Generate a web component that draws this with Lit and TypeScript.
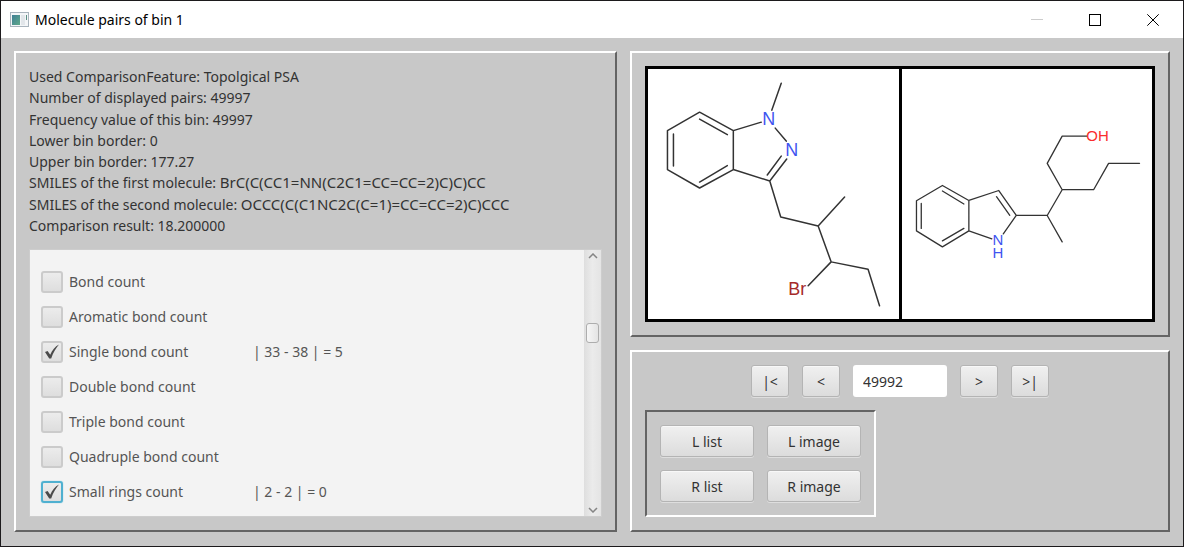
import { LitElement, html, css, svg } from "lit";
import { customElement, property, state } from "lit/decorators.js";

interface Feature {
  name: string;
  checked: boolean;
  result?: string;
  focused?: boolean;
}

interface Fact {
  label: string;
  value: string;
  smiles?: boolean;
}

const FACTS: Fact[] = [
  { label: "Used ComparisonFeature", value: "Topolgical PSA" },
  { label: "Number of displayed pairs", value: "49997" },
  { label: "Frequency value of this bin", value: "49997" },
  { label: "Lower bin border", value: "0" },
  { label: "Upper bin border", value: "177.27" },
  { label: "SMILES of the first molecule", value: "BrC(C(CC1=NN(C2C1=CC=CC=2)C)C)CC", smiles: true },
  { label: "SMILES of the second molecule", value: "OCCC(C(C1NC2C(C=1)=CC=CC=2)C)CCC", smiles: true },
  { label: "Comparison result", value: "18.200000" },
];

const FEATURES: Feature[] = [
  { name: "Bond count", checked: false },
  { name: "Aromatic bond count", checked: false },
  { name: "Single bond count", checked: true, result: "| 33 - 38 | = 5" },
  { name: "Double bond count", checked: false },
  { name: "Triple bond count", checked: false },
  { name: "Quadruple bond count", checked: false },
  { name: "Small rings count", checked: true, result: "| 2 - 2 | = 0", focused: true },
];

@customElement("feature-list")
export class FeatureList extends LitElement {
  @property({ attribute: false }) features: Feature[] = [];
  @property({ type: Number }) position = 25;

  static styles = css`
    :host { display: flex; background: #f3f3f3; border: 1px solid #cdcdcd; box-sizing: border-box; color: #555; overflow: hidden; }
    .rows { flex: 1; min-width: 0; margin: 0; padding: 14px 0 0 11px; list-style: none; overflow: hidden; }
    .row { display: grid; grid-template-columns: 212px 1fr; align-items: center; height: 35px; }
    .name { display: flex; align-items: center; gap: 6px; white-space: nowrap; }
    .box {
      appearance: none; box-sizing: border-box; width: 22px; height: 22px; margin: 0; flex: none;
      border: 2px solid #cbcbcb; border-radius: 3px;
      background: linear-gradient(#ececec, #dedede);
    }
    .box:checked {
      background: url("data:image/svg+xml,%3Csvg xmlns='http://www.w3.org/2000/svg' viewBox='0 0 18 18'%3E%3Cpath d='M2 9 L4.6 8 L7.2 11.8 C9.2 7.4 12 3.600 16 1.600 C12.8 5.400 10.200 9.800 8.200 15.400 L6.200 15.400 Z' fill='%234a4a4a'/%3E%3C/svg%3E") center / 18px no-repeat, linear-gradient(#ececec, #dedede);
    }
    .box.focused { border-color: #4fb0d0; box-shadow: 0 0 1px #4fb0d0; }
    .bar { display: flex; flex-direction: column; width: 17px; background: linear-gradient(90deg, #dedede, #ebebeb 50%, #e4e4e4); }
    .step { display: grid; place-items: center; height: 12px; padding: 0; border: 0; background: none; }
    .track { flex: 1; display: flex; flex-direction: column; align-items: center; }
    .thumb { box-sizing: border-box; width: 13px; height: 20px; border: 1px solid #adadad; border-radius: 3px; background: linear-gradient(90deg, #f6f6f6, #e4e4e4); }
    .spacer { flex: none; }
  `;

  render() {
    return html`
      <ul class="rows">
        ${this.features.map(
          (f) => html`<li class="row">
            <label class="name">
              <input class="box ${f.focused ? "focused" : ""}" type="checkbox" .checked=${f.checked} />
              <span>${f.name}</span>
            </label>
            <span>${f.result ?? ""}</span>
          </li>`
        )}
      </ul>
      <div class="bar">
        <button class="step" aria-label="Scroll up">
          <svg width="10" height="6" viewBox="0 0 10 6"><path d="M1 5 L5 1 L9 5" fill="none" stroke="#858585" stroke-width="1.5" /></svg>
        </button>
        <div class="track">
          <div class="spacer" style="height:${this.position}%"></div>
          <div class="thumb"></div>
        </div>
        <button class="step" aria-label="Scroll down">
          <svg width="10" height="6" viewBox="0 0 10 6"><path d="M1 1 L5 5 L9 1" fill="none" stroke="#858585" stroke-width="1.5" /></svg>
        </button>
      </div>
    `;
  }
}

@customElement("molecule-pair")
export class MoleculePair extends LitElement {
  static styles = css`
    :host { display: grid; grid-template-columns: 1fr 1fr; gap: 3px; padding: 3px; background: #000; }
    .cell { display: block; width: 100%; height: 100%; min-height: 0; background: #fff; }
    .bonds { fill: none; stroke: #333; stroke-width: 1.5; stroke-linecap: round; stroke-linejoin: round; }
    .thin { stroke-width: 1.3; }
    .atom { font-family: "Liberation Sans", Arial, sans-serif; font-size: 18px; text-anchor: middle; }
    .small { font-size: 15px; }
    .n { fill: #3f55f0; }
    .br { fill: #a52a2a; }
    .o { fill: #fa2d2d; }
  `;

  private first() {
    return svg`
      <path class="bonds" d="M699.7 112 L667.5 130.5 V169.5 L699.7 188 L733.5 169.5 V130.5 Z
        M673.5 134 V166 M699.7 119 L727.5 134.5 M699.7 182 L727.5 165.5
        M733.5 130.5 L761.5 122 M772 110 L781.5 83 M775.5 128 L786.5 141
        M787 159 L770 181 L733.5 169.5 M781.5 156 L767.5 175
        M770 181 L781 217 L818.5 226 L845 197 M818.5 226 L831.5 262 L868.5 269.5 L880 306
        M831.5 262 L808.5 286" />
      <text class="atom n" x="769" y="125">N</text>
      <text class="atom n" x="792" y="156">N</text>
      <text class="atom br" x="797.5" y="295">Br</text>`;
  }

  private second() {
    return svg`
      <path class="bonds thin" d="M942.5 185.5 L916.5 200.7 V231 L942.5 247 L969 231 V200.5 Z
        M921.3 203.5 V228.5 M942.5 191 L964 204 M942.5 241 L964 228.5
        M969 200.5 L999 190.5 L1016.5 215.5 L1003.5 234 M996.7 196.7 L1010 215.3
        M969 231 L992 239
        M1016.5 215.5 H1047.5 L1062.5 242 M1047.5 215.5 L1062.5 189.7 H1094 L1109 163.3 H1140
        M1062.5 189.7 L1047.5 163.3 L1062.5 136 H1087" />
      <text class="atom small n"><tspan x="998" y="245">N</tspan><tspan x="998" y="258">H</tspan></text>
      <text class="atom small o" x="1098" y="141">OH</text>`;
  }

  render() {
    return html`
      <svg class="cell" viewBox="648 69 251 250" role="img" aria-label="First molecule">${this.first()}</svg>
      <svg class="cell" viewBox="902 69 251 250" role="img" aria-label="Second molecule">${this.second()}</svg>
    `;
  }
}

@customElement("app-root")
export class AppRoot extends LitElement {
  @state() private index = "49992";

  static styles = css`
    :host {
      display: flex; flex-direction: column; box-sizing: border-box; height: 100vh;
      border: 1px solid #1c1a1c; background: #c8c8c8; color: #333;
      font: 14px/21px "Noto Sans", "Open Sans", sans-serif;
    }
    .titlebar { display: flex; align-items: center; height: 37px; padding: 0 1px 0 9px; background: #fff; color: #000; }
    .title { flex: 1; margin: 0 0 0 6px; font: inherit; }
    .control { display: grid; place-items: center; width: 58px; height: 36px; padding: 0; border: 0; background: none; }
    .content { flex: 1; min-height: 0; display: grid; grid-template-columns: 603fr 540fr; gap: 13px; padding: 13px 13px 14px; }
    .side { display: flex; flex-direction: column; gap: 13px; min-width: 0; }
    .panel { display: flex; flex-direction: column; gap: 13px; padding: 13px; min-width: 0; border: 2px solid; border-color: #fff #646464 #646464 #fff; }
    .inset { align-self: flex-start; display: grid; grid-template-columns: 94px 94px; gap: 13px; padding: 13px; border: 2px solid; border-color: #646464 #fff #fff #646464; }
    .facts { flex: 1; display: flex; flex-direction: column; justify-content: space-between; margin: 0; padding: 0; list-style: none; }
    .fact { height: 21px; white-space: nowrap; }
    .smiles { font-size: 15px; }
    .features { height: 268px; }
    .images { flex: 1; }
    .pair { flex: 1; }
    .nav { display: flex; justify-content: center; gap: 13px; }
    .button {
      box-sizing: border-box; height: 32px; padding: 0; border: 1px solid #b4b4b4; border-radius: 3px;
      background: linear-gradient(#f0f0f0, #dcdcdc); box-shadow: inset 0 1px #f8f8f8, 0 1px #dedede;
      color: #333; font: inherit;
    }
    .step { width: 38px; }
    .index { box-sizing: border-box; width: 94px; height: 32px; padding: 0 10px; border: 0; border-radius: 3px; background: #fff; color: #333; font: inherit; }
  `;

  render() {
    return html`
      <header class="titlebar">
        <svg width="19" height="15" viewBox="0 0 19 15">
          <defs><linearGradient id="g" x2="1" y2="1"><stop stop-color="#3f7f95" /><stop offset="1" stop-color="#5fa98a" /></linearGradient></defs>
          <rect x="0.5" y="0.5" width="18" height="14" fill="#f4f6f8" stroke="#a9b4bd" />
          <rect x="2" y="3" width="8" height="10" fill="url(#g)" />
          <rect x="11" y="3" width="4" height="10" fill="#e2e6ea" />
          <rect x="16" y="3" width="1" height="5" fill="#5b8f84" />
        </svg>
        <h1 class="title">Molecule pairs of bin 1</h1>
        <button class="control" aria-label="Minimize">
          <svg width="12" height="12"><path d="M0 5.5 H12" stroke="#ccc" /></svg>
        </button>
        <button class="control" aria-label="Maximize">
          <svg width="12" height="12"><rect x="0.5" y="0.5" width="11" height="11" fill="none" stroke="#000" /></svg>
        </button>
        <button class="control" aria-label="Close">
          <svg width="12" height="12"><path d="M0.3 0.3 L11.7 11.7 M11.7 0.3 L0.3 11.7" stroke="#000" /></svg>
        </button>
      </header>
      <main class="content">
        <section class="panel">
          <ul class="facts">
            ${FACTS.map((f) => html`<li class="fact">${f.label}: <span class=${f.smiles ? "smiles" : ""}>${f.value}</span></li>`)}
          </ul>
          <feature-list class="features" .features=${FEATURES}></feature-list>
        </section>
        <div class="side">
          <section class="panel images"><molecule-pair class="pair"></molecule-pair></section>
          <section class="panel">
            <nav class="nav">
              <button class="button step">|&lt;</button>
              <button class="button step">&lt;</button>
              <input class="index" aria-label="Pair number" .value=${this.index}
                @input=${(e: Event) => (this.index = (e.target as HTMLInputElement).value)} />
              <button class="button step">&gt;</button>
              <button class="button step">&gt;|</button>
            </nav>
            <div class="inset">
              <button class="button">L list</button>
              <button class="button">L image</button>
              <button class="button">R list</button>
              <button class="button">R image</button>
            </div>
          </section>
        </div>
      </main>
    `;
  }
}
